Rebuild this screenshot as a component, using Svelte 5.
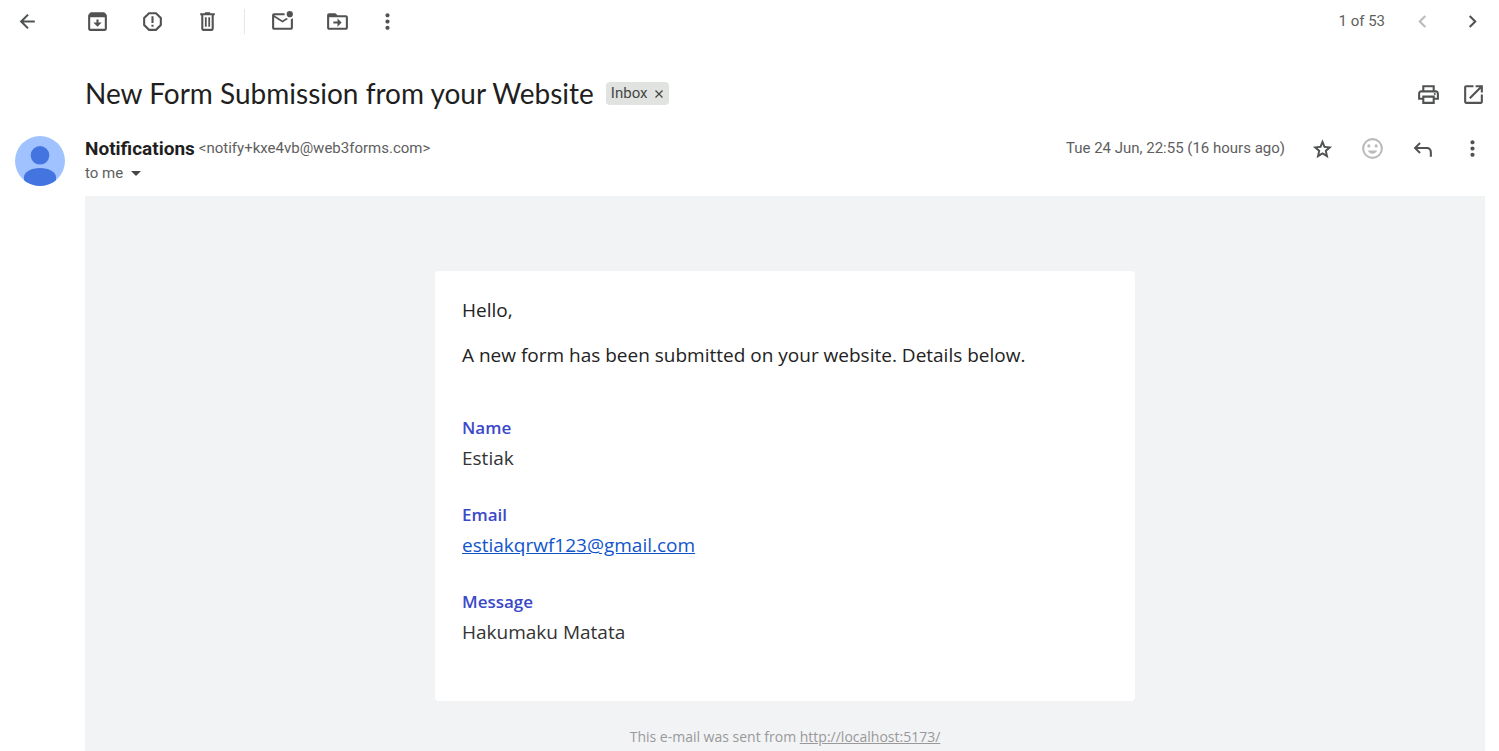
<script>
  const tools = [
    { label: 'Archive', path: 'M20.54 5.23l-1.39-1.68C18.88 3.21 18.47 3 18 3H6c-.47 0-.88.21-1.16.55L3.46 5.23C3.17 5.57 3 6.02 3 6.5V19c0 1.100.9 2 2 2h14c1.100 0 2-.9 2-2V6.500c0-.48-.17-.93-.46-1.270zM19 19H5V8h14v11zM11 10h2V13h3l-4 4-4-4h3z' },
    { label: 'Report spam', path: 'M15.730 3H8.270L3 8.270v7.460L8.270 21h7.460L21 15.730V8.270L15.730 3zM19 14.900L14.900 19H9.100L5 14.900V9.100L9.100 5h5.800L19 9.100v5.800zM11 7h2v6.500h-2zM11 15h2v2h-2z' },
    { label: 'Delete', path: 'M14.500 4V3h-5v1H5v2h1v13c0 1.100.9 2 2 2h8c1.100 0 2-.9 2-2V6h1V4zM16 19H8V6h8zM9.500 8h1.700v9H9.500zM12.800 8h1.700v9h-1.700z' }
  ];
  const moves = [
    { label: 'Mark as unread', path: 'M22 8.980V18c0 1.100-.9 2-2 2H4c-1.100 0-2-.9-2-2V6c0-1.100.9-2 2-2h10.100c-.06.320-.1.660-.1 1s.04.680.1 1H4l8 5 3.670-2.290c.47.430 1.020.760 1.630.980L12 13 4 8v10h16V9.900c.74-.15 1.420-.48 2-.92zM16 5a3 3 0 1 0 6 0 3 3 0 0 0-6 0z' },
    { label: 'Move to', path: 'M20 6h-8l-2-2H4c-1.100 0-2 .9-2 2v12c0 1.100.9 2 2 2h16c1.100 0 2-.9 2-2V8c0-1.100-.9-2-2-2zm0 12H4V8h16v10zM12 17l4-4-4-4v3H8v2h4z' },
    { label: 'More', path: 'M12 8c1.100 0 2-.9 2-2s-.9-2-2-2-2 .9-2 2 .9 2 2 2zm0 2c-1.100 0-2 .9-2 2s.9 2 2 2 2-.9 2-2-.9-2-2-2zm0 6c-1.100 0-2 .9-2 2s.9 2 2 2 2-.9 2-2-.9-2-2-2z' }
  ];
  const more = moves[2].path;
  const back = 'M19 11H8.300l4.900-4.900L11.800 4.700 4.500 12l7.300 7.300 1.400-1.400L8.300 13H19z';
  const print = 'M19 8h-1V3H6v5H5c-1.660 0-3 1.340-3 3v6h4v4h12v-4h4v-6c0-1.660-1.340-3-3-3zM8 5h8v3H8V5zm8 14H8v-4h8v4zm2-4v-2H6v2H4v-4c0-.55.45-1 1-1h14c.55 0 1 .45 1 1v4h-2zM17 11.500a1 1 0 1 0 2 0 1 1 0 0 0-2 0z';
  const open = 'M19 19H5V5h7V3H5c-1.110 0-2 .9-2 2v14c0 1.100.89 2 2 2h14c1.100 0 2-.9 2-2v-7h-2v7zM14 3v2h3.590l-9.830 9.830 1.410 1.410L19 6.410V10h2V3h-7z';
  const star = 'M21.200 10.200l-6.600-.6L12 3.200 9.400 9.600l-6.600.6 5 4.400-1.500 6.800L12 17.800l5.700 3.600-1.500-6.800zM12 15.500l-2.900 1.800.8-3.400-2.600-2.300 3.500-.3L12 8.100l1.200 3.200 3.500.3-2.600 2.300.8 3.400z';
  const smile = 'M12 2a10 10 0 1 0 0 20 10 10 0 0 0 0-20zm0 18a8 8 0 1 1 0-16 8 8 0 0 1 0 16zM7 9.500a1.500 1.500 0 1 0 3 0 1.500 1.500 0 0 0-3 0zM14 9.500a1.500 1.500 0 1 0 3 0 1.500 1.500 0 0 0-3 0zM7.500 14h9c-.7 1.700-2.400 3-4.500 3s-3.800-1.300-4.500-3z';
  const reply = 'M9 6L3.500 11.500 9 17l1.300-1.400-3.100-3.100H16c2 0 3 1 3 3V20h2v-4.500c0-3-2-5-5-5H7.200l3.100-3.100z';
  const fields = [
    { name: 'Name', value: 'Estiak' },
    { name: 'Email', value: 'estiakqrwf123@gmail.com', href: 'mailto:estiakqrwf123@gmail.com' },
    { name: 'Message', value: 'Hakumaku Matata' }
  ];
</script>

{#snippet iconButton(label, path, faded = false)}
  <button class="icon" class:faded aria-label={label}>
    <svg viewBox="0 0 24 24" aria-hidden="true"><path d={path} fill-rule="evenodd" /></svg>
  </button>
{/snippet}

<div class="page">
  <nav class="toolbar" aria-label="Message actions">
    <div class="back">{@render iconButton('Back', back)}</div>
    <div class="group">
      {#each tools as t}{@render iconButton(t.label, t.path)}{/each}
    </div>
    <span class="divider"></span>
    <div class="group">
      {#each moves.slice(0, 2) as t}{@render iconButton(t.label, t.path)}{/each}
    </div>
    <div class="overflow">{@render iconButton('More', more)}</div>
    <span class="count">1 of 53</span>
    <div class="pager">
      {@render iconButton('Newer', 'M15.400 7.400L14 6l-6 6 6 6 1.400-1.400L10.800 12z', true)}
      {@render iconButton('Older', 'M10 6L8.600 7.400l4.600 4.600-4.600 4.600L10 18l6-6z')}
    </div>
  </nav>

  <header class="subject">
    <h1>New Form Submission from your Website</h1>
    <span class="label">Inbox <button aria-label="Remove label Inbox">
      <svg viewBox="0 0 8 8" aria-hidden="true"><path d="M.5.5l7 7M7.500.5l-7 7" /></svg>
    </button></span>
    <div class="subject-actions">
      {@render iconButton('Print', print)}
      {@render iconButton('Open in new window', open)}
    </div>
  </header>

  <section class="message">
    <svg class="avatar" viewBox="0 0 50 50" role="img" aria-label="Notifications">
      <defs><clipPath id="disc"><circle cx="25" cy="25" r="25" /></clipPath></defs>
      <g clip-path="url(#disc)">
        <path fill="#a0c3ff" d="M0 0h50v50H0z" />
        <circle cx="25" cy="19.300" r="9.300" fill="#4374e0" />
        <path fill="#4374e0" d="M9 50V41c0-5 7-9 16-9s16 4 16 9v9z" />
      </g>
    </svg>
    <div class="content">
      <div class="meta">
        <div class="sender">
          <div class="from"><strong>Notifications</strong><span>&lt;notify+kxe4vb@web3forms.com&gt;</span></div>
          <button class="to">to me <span class="caret"></span></button>
        </div>
        <time>Tue 24 Jun, 22:55 (16 hours ago)</time>
        <div class="message-actions">
          {@render iconButton('Star', star)}
          {@render iconButton('Add reaction', smile, true)}
          {@render iconButton('Reply', reply)}
          {@render iconButton('More message options', more)}
        </div>
      </div>

      <div class="body">
        <article>
          <p>Hello,</p>
          <p>A new form has been submitted on your website. Details below.</p>
          <dl>
            {#each fields as f}
              <div>
                <dt>{f.name}</dt>
                <dd>{#if f.href}<a href={f.href}>{f.value}</a>{:else}{f.value}{/if}</dd>
              </div>
            {/each}
          </dl>
        </article>
        <footer>This e-mail was sent from <a href="http://localhost:5173/">http://localhost:5173/</a></footer>
      </div>
    </div>
  </section>
</div>

<style>
  :global(body) { margin: 0; background: #fff; }
  .page {
    box-sizing: border-box;
    height: 100vh;
    overflow: hidden;
    display: flex;
    flex-direction: column;
    font-family: Roboto, "Liberation Sans", sans-serif;
    color: #5e5e5e;
    font-size: 15px;
  }
  button { border: 0; padding: 0; background: none; font: inherit; color: inherit; cursor: pointer; }
  .icon { flex: none; width: 35px; height: 35px; display: grid; place-items: center; }
  .icon svg { width: 25px; height: 25px; fill: #505352; }
  .faded svg { fill: #b9baba; }

  .toolbar { flex: none; display: flex; align-items: center; height: 43px; padding: 0 9px 0 10px; }
  .back { margin-right: 35px; }
  .group { display: flex; gap: 20px; }
  .divider { width: 1px; height: 25px; margin: 0 20px 0 19px; background: #dfe8ef; }
  .overflow { margin-left: 15px; }
  .count { margin-left: auto; margin-right: 20px; padding-bottom: 2px; }
  .pager { display: flex; gap: 15px; }

  .subject { flex: none; display: flex; align-items: center; height: 51px; margin-top: 25px; padding: 0 8px 0 85px; }
  h1 { margin: 0; padding-bottom: 2px; font: 400 28px/36px Lato, sans-serif; color: #1f1f1f; }
  .label { display: flex; align-items: center; gap: 8px; height: 23px; margin-left: 12px; padding: 0 6px 0 5px; border-radius: 4px; background: #e1e3e1; color: #444746; line-height: 23px; }
  .label button { display: grid; }
  .label svg { width: 8px; height: 8px; stroke: #444746; stroke-width: 1.300; fill: none; }
  .subject-actions { display: flex; gap: 10px; margin-left: auto; padding-top: 2px; }

  .message { flex: 1; min-height: 0; display: flex; padding: 0 14px 0 15px; }
  .avatar { flex: none; width: 50px; height: 50px; margin: 17px 20px 0 0; }
  .content { flex: 1; min-width: 0; display: flex; flex-direction: column; }
  .meta { flex: none; display: flex; height: 77px; }
  .sender { flex: 1; padding-top: 17px; line-height: 25px; }
  .from { display: flex; gap: 4px; }
  .from strong { font: 700 19px/25px Roboto, sans-serif; color: #1f1f1f; }
  .to { display: flex; align-items: center; gap: 8px; line-height: 25px; }
  .caret { border: 5px solid transparent; border-top-color: #444746; border-bottom: 0; }
  time { padding-top: 17px; line-height: 25px; }
  .message-actions { display: flex; gap: 15px; margin: 12px -5px 0 20px; }

  .body { flex: 1; padding-top: 75px; background: #f2f3f5; font-family: "Open Sans", "Noto Sans", sans-serif; }
  article { box-sizing: border-box; max-width: 700px; margin: 0 auto; padding: 24px 27px; border-radius: 4px; background: #fff; color: #222; font-size: 19px; line-height: 30px; }
  p { margin: 0 0 15px; }
  dl { margin: 42px 0 0; display: flow-root; }
  dl div { padding-bottom: 26px; }
  dl div:last-child { padding-bottom: 30px; }
  dt { color: #3b49c9; font-size: 17px; font-weight: 600; line-height: 31px; }
  dd { margin: 0; color: #333; }
  dd a { color: #15c; }
  footer { margin-top: 26px; text-align: center; font-size: 14px; line-height: 20px; color: #999; }
  footer a { color: #999; }
</style>
